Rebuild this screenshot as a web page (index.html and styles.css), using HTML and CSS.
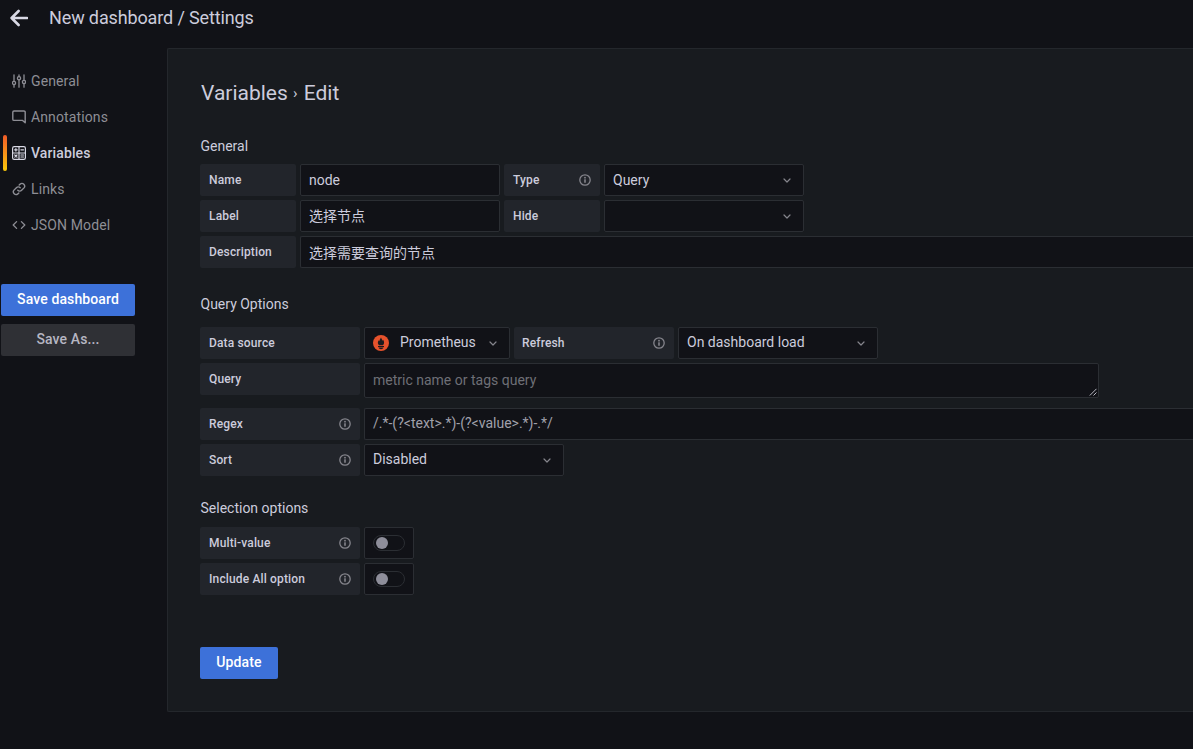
FILE: index.html
```html
<!doctype html>
<html lang="zh">
<head>
	<meta charset="UTF-8">
	<title>New dashboard / Settings</title>
	<link rel="stylesheet" href="styles.css">
</head>
<body>
	<svg class="defs" width="0" height="0">
		<symbol id="info" viewBox="0 0 12 12">
			<circle cx="6" cy="6" r="5.2" fill="none" stroke="currentColor" stroke-width="1.3"/>
			<circle cx="6" cy="3.7" r="0.9" fill="currentColor"/>
			<rect x="5.2" y="5.2" width="1.6" height="3.6" rx="0.4" fill="currentColor"/>
		</symbol>
		<symbol id="chevron" viewBox="0 0 8 5">
			<path d="M1 1 4 4 7 1" fill="none" stroke="currentColor" stroke-width="1.2" stroke-linecap="round" stroke-linejoin="round"/>
		</symbol>
	</svg>

	<header class="topbar">
		<svg class="back" viewBox="0 0 18 18">
			<path d="M8.6 2 1.6 9l7 7M2 9h15" fill="none" stroke="currentColor" stroke-width="2.6" stroke-linecap="round" stroke-linejoin="round"/>
		</svg>
		<h1>New dashboard / Settings</h1>
	</header>

	<div class="layout">
		<aside class="sidebar">
			<nav class="nav">
				<a class="nav-item" href="#">
					<svg class="nav-icon" viewBox="0 0 14 14" fill="none" stroke="currentColor" stroke-width="1.3" stroke-linecap="round">
						<path d="M2 .8v6.400M2 10.600v2.600M7 .8v1.600M7 6v7.200M12 .8v5.400M12 9.600v3.600"/>
						<circle cx="2" cy="8.900" r="1.600"/><circle cx="7" cy="4.200" r="1.600"/><circle cx="12" cy="7.900" r="1.600"/>
					</svg>
					General
				</a>
				<a class="nav-item" href="#">
					<svg class="nav-icon" viewBox="0 0 14 14" fill="none" stroke="currentColor" stroke-width="1.4" stroke-linejoin="round">
						<path d="M2 1h10a1.200 1.200 0 0 1 1.200 1.200v10.600l-2.600-2.400H2A1.200 1.200 0 0 1 .8 9.200v-7A1.200 1.200 0 0 1 2 1z"/>
					</svg>
					Annotations
				</a>
				<a class="nav-item active" href="#">
					<svg class="nav-icon" viewBox="0 0 14 14" fill="none" stroke="currentColor" stroke-width="1.200" stroke-linecap="round">
						<rect x=".6" y=".6" width="12.800" height="12.800" rx="1.600"/>
						<path d="M7 .6v12.800M.6 7h12.800M2.600 3.800h2.600M3.900 2.500v2.600M8.900 3.800h2.600M2.800 9l2.200 2.200M5 9l-2.200 2.200M8.900 9h2.600M8.900 11h2.600"/>
					</svg>
					Variables
				</a>
				<a class="nav-item" href="#">
					<svg class="nav-icon" viewBox="0 0 14 14" fill="none" stroke="currentColor" stroke-width="1.4" stroke-linecap="round">
						<path d="M5.800 8.200a2.600 2.600 0 0 0 3.800.1l2.400-2.400a2.700 2.700 0 0 0-3.800-3.800L7.200 3"/>
						<path d="M8.200 5.800a2.600 2.600 0 0 0-3.800-.1L2 8.100a2.700 2.700 0 0 0 3.800 3.800l1-1"/>
					</svg>
					Links
				</a>
				<a class="nav-item" href="#">
					<svg class="nav-icon" viewBox="0 0 14 14" fill="none" stroke="currentColor" stroke-width="1.300" stroke-linecap="round" stroke-linejoin="round">
						<path d="M4.600 3.600 1.200 7l3.400 3.400M9.400 3.600 12.800 7l-3.400 3.400"/>
					</svg>
					JSON Model
				</a>
			</nav>
			<button class="btn btn-primary btn-wide" type="button">Save dashboard</button>
			<button class="btn btn-secondary btn-wide" type="button">Save As...</button>
		</aside>

		<main class="panel">
			<h2 class="title">Variables <span class="sep">›</span> Edit</h2>

			<h3 class="section first">General</h3>
			<div class="row">
				<div class="label w96">Name</div>
				<div class="field w200">node</div>
				<div class="label w96">Type <svg class="info"><use href="#info"/></svg></div>
				<div class="field w200">Query <svg class="chev"><use href="#chevron"/></svg></div>
			</div>
			<div class="row">
				<div class="label w96">Label</div>
				<div class="field w200"><span class="up">选择节点</span></div>
				<div class="label w96">Hide</div>
				<div class="field w200"><svg class="chev"><use href="#chevron"/></svg></div>
			</div>
			<div class="row">
				<div class="label w96">Description</div>
				<div class="field wfull">选择需要查询的节点</div>
			</div>

			<h3 class="section query-head">Query Options</h3>
			<div class="row">
				<div class="label w160">Data source</div>
				<div class="field w146">
					<svg class="prom" viewBox="0 0 16 16">
						<circle cx="8" cy="8" r="8" fill="#e6522c"/>
						<path d="M8 2.400c.4 1.500 1.600 1.900 1.200 3.300.5-.2.7-.6.8-1 .9 1.100 1.300 2.200 1 3.600-.1.800-.5 1.500-1 2H6c-.6-.5-1-1.200-1.100-2-.2-1.200.2-2.200.9-3.100.1.500.3.800.7 1-.3-1.500.9-2.200 1.500-3.800z" fill="#1b1b1f"/>
						<rect x="5" y="11" width="6" height="1" fill="#1b1b1f"/>
						<path d="M5.500 12.600h5c-.3 1-1.300 1.600-2.500 1.600s-2.200-.6-2.500-1.600z" fill="#1b1b1f"/>
					</svg>
					<span class="up">Prometheus</span>
					<svg class="chev"><use href="#chevron"/></svg>
				</div>
				<div class="label w160 tight">Refresh <svg class="info"><use href="#info"/></svg></div>
				<div class="field w200"><span class="up">On dashboard load</span> <svg class="chev"><use href="#chevron"/></svg></div>
			</div>
			<div class="row row-query">
				<div class="label w160 label-short">Query</div>
				<div class="field area"><span class="up">metric name or tags query</span>
					<svg class="grip" viewBox="0 0 8 8"><path d="M7.500.8.800 7.500M7.500 4.500 4.500 7.500" stroke="#b9b9c4" stroke-width="1" fill="none"/></svg>
				</div>
			</div>
			<div class="row">
				<div class="label w160">Regex <svg class="info"><use href="#info"/></svg></div>
				<div class="field wfull regex"><span class="up">/.*-(?&lt;text&gt;.*)-(?&lt;value&gt;.*)-.*/</span></div>
			</div>
			<div class="row">
				<div class="label w160">Sort <svg class="info"><use href="#info"/></svg></div>
				<div class="field w200"><span class="up">Disabled</span> <svg class="chev"><use href="#chevron"/></svg></div>
			</div>

			<h3 class="section select-head">Selection options</h3>
			<div class="row">
				<div class="label w160">Multi-value <svg class="info"><use href="#info"/></svg></div>
				<div class="field switch-box"><span class="switch"></span></div>
			</div>
			<div class="row">
				<div class="label w160">Include All option <svg class="info"><use href="#info"/></svg></div>
				<div class="field switch-box"><span class="switch"></span></div>
			</div>

			<button class="btn btn-primary update" type="button">Update</button>
		</main>
	</div>
</body>
</html>
```

FILE: styles.css
```css
* {
	box-sizing: border-box;
}

html, body {
	height: 100%;
}

body {
	margin: 0;
	overflow: hidden;
	background: #111217;
	color: #ccccdc;
	font: 14px Roboto, "Noto Sans CJK SC", sans-serif;
}

.defs {
	display: block;
	height: 0;
}

.topbar {
	display: flex;
	align-items: center;
	height: 36px;
	padding-left: 10px;
}

.back {
	width: 18px;
	height: 18px;
	margin-right: 21px;
	color: #d8d8e4;
}

.topbar h1 {
	margin: 0 0 2px;
	font-size: 18px;
	font-weight: 400;
	letter-spacing: -0.13px;
}

.layout {
	display: flex;
	margin-top: 12px;
}

.sidebar {
	width: 167px;
	flex: none;
	padding-top: 15px;
}

.nav {
	margin-bottom: 41px;
}

.nav-item {
	position: relative;
	display: flex;
	align-items: center;
	height: 36px;
	padding-left: 12px;
	color: #8e8e95;
	text-decoration: none;
	letter-spacing: 0.12px;
}

.nav-icon {
	width: 14px;
	height: 14px;
	margin-right: 5px;
}

.nav-item.active {
	color: #ccccdc;
	font-weight: 500;
}

.nav-item.active::before {
	content: "";
	position: absolute;
	left: 3px;
	top: 0;
	width: 4px;
	height: 36px;
	border-radius: 2px;
	background: linear-gradient(#f05a28, #fbca0a);
}

.nav-item.active .nav-icon {
	color: #d8d8e4;
}

.btn {
	display: block;
	height: 32px;
	padding: 0 16px 2px;
	border: 0;
	border-radius: 2px;
	font: 500 14px Roboto, sans-serif;
	letter-spacing: 0.12px;
}

.btn-wide {
	width: 134px;
	margin-left: 1px;
	padding: 0 0 2px;
}

.btn-primary {
	background: #3d71d9;
	color: #fff;
}

.btn-secondary {
	margin-top: 8px;
	background: #2f3035;
	color: #b6b6c2;
}

.panel {
	flex: 1;
	min-width: 0;
	height: 664px;
	padding: 32px 0 0 32px;
	background: #181b1f;
	border: 1px solid #24272c;
	border-right: 0;
	border-radius: 2px 0 0 2px;
}

.title {
	margin: 0;
	padding-left: 1px;
	font-size: 21px;
	line-height: 25px;
	font-weight: 400;
	word-spacing: 1px;
}

.sep {
	font-size: 15px;
	vertical-align: 2px;
	margin-left: -1px;
}

.section {
	margin: 0;
	padding-left: 0.5px;
	font-size: 14px;
	line-height: 18px;
	font-weight: 400;
}

.first {
	margin: 31px 0 9px;
}

.query-head {
	margin: 27px 0 14px;
}

.select-head {
	margin: 23px 0 10px;
}

.row {
	display: flex;
	gap: 4px;
	margin-bottom: 4px;
}

.label {
	display: flex;
	align-items: center;
	justify-content: space-between;
	height: 32px;
	padding: 0 9px;
	background: #22252b;
	border-radius: 2px;
	font-size: 12px;
	font-weight: 500;
	letter-spacing: 0.15px;
}

.tight {
	padding-left: 8px;
}

.w96 {
	width: 96px;
}

.w160 {
	width: 160px;
}

.w146 {
	width: 146px;
}

.w200 {
	width: 200px;
}

.field {
	position: relative;
	display: flex;
	align-items: center;
	height: 32px;
	padding: 0 8px;
	background: #111217;
	border: 1px solid #2b2e33;
	border-radius: 2px;
}

.wfull {
	flex: 1;
	border-right: 0;
	border-radius: 2px 0 0 2px;
}

.up {
	position: relative;
	top: -1px;
}

.info {
	width: 12px;
	height: 12px;
	flex: none;
	color: #85858c;
}

.chev {
	width: 8px;
	height: 5px;
	margin-left: auto;
	margin-right: 4px;
	color: #85858c;
}

.prom {
	width: 16px;
	height: 16px;
	flex: none;
	margin-right: 11px;
}

.row-query {
	margin-bottom: 10px;
}

.label-short {
	align-self: flex-start;
}

.area {
	width: 735px;
	height: 35px;
	color: #6e6f76;
}

.grip {
	position: absolute;
	right: 1px;
	bottom: 1px;
	width: 8px;
	height: 8px;
}

.regex {
	color: #a0a0ab;
}

.switch-box {
	width: 50px;
	justify-content: center;
	padding: 0;
}

.switch {
	position: relative;
	width: 32px;
	height: 16px;
	background: #111217;
	border: 1px solid #2b2e33;
	border-radius: 8px;
}

.switch::before {
	content: "";
	position: absolute;
	left: 2px;
	top: 1px;
	width: 12px;
	height: 12px;
	border-radius: 50%;
	background: #8e8e9a;
}

.update {
	width: 78px;
	padding: 0 0 2px;
	margin-top: 52px;
}
```
